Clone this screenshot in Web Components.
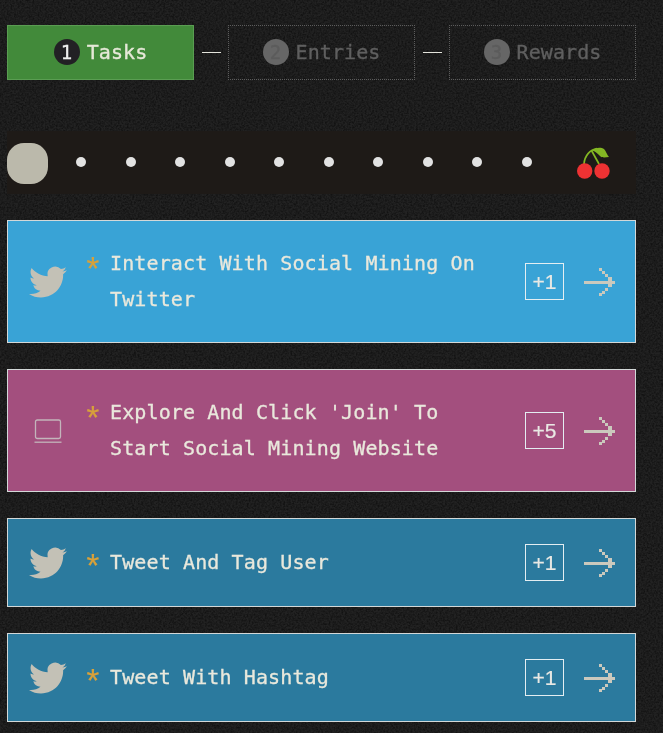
<!DOCTYPE html>
<html lang="en"><head><meta charset="utf-8"><title>Tasks</title>
<style>
html{margin:0;background:#1f1f1f;}
body{margin:0;width:663px;height:733px;overflow:hidden;font-family:"DejaVu Sans Mono","Liberation Mono",monospace;}
</style></head><body>
<noise-bg></noise-bg>
<quest-page>
  <step-bar slot="steps">
    <step-item n="1" active>Tasks</step-item>
    <step-sep></step-sep>
    <step-item n="2">Entries</step-item>
    <step-sep></step-sep>
    <step-item n="3">Rewards</step-item>
  </step-bar>
  <progress-track slot="track"></progress-track>
  <task-card color="#39a3d6" icon="bird" points="+1">Interact With Social Mining On Twitter</task-card>
  <task-card color="#a34f7e" icon="laptop" points="+5">Explore And Click 'Join' To Start Social Mining Website</task-card>
  <task-card color="#2b7a9e" icon="bird" points="+1" short>Tweet And Tag User</task-card>
  <task-card color="#2b7a9e" icon="bird" points="+1" short>Tweet With Hashtag</task-card>
</quest-page>
<script>
const BIRD='<svg viewBox="0 0 24 24" width="38" height="38" fill="#c3c1b6" style="display:block"><path d="M23.95 4.57a10 10 0 0 1-2.82.77 4.96 4.96 0 0 0 2.16-2.72c-.95.55-2 .96-3.13 1.2a4.92 4.92 0 0 0-8.38 4.48C7.69 8.1 4.07 6.13 1.64 3.16a4.82 4.82 0 0 0-.67 2.48c0 1.71.87 3.21 2.19 4.1a4.9 4.9 0 0 1-2.23-.61v.06c0 2.39 1.7 4.38 3.95 4.83a5 5 0 0 1-2.21.08 4.94 4.94 0 0 0 4.6 3.42A9.87 9.87 0 0 1 0 19.54a14 14 0 0 0 7.56 2.21c9.05 0 14-7.5 14-13.98 0-.21 0-.42-.02-.63a9.94 9.94 0 0 0 2.41-2.57z"/></svg>';
const LAPTOP='<svg viewBox="0 0 28 24" width="28" height="24" fill="none" stroke="#c3b5bb" stroke-width="1.300" style="display:block"><rect x="1.500" y="1" width="25" height="18.500" rx="1.800"/><path d="M.5 23.200h27"/></svg>';
function def(name,html,init){
  customElements.define(name,class extends HTMLElement{
    connectedCallback(){
      if(this.shadowRoot)return;
      const r=this.attachShadow({mode:'open'});
      r.innerHTML=typeof html==='function'?html(this):html;
      if(init)init(this,r);
    }
  });
}
def('noise-bg',`<style>:host{position:fixed;inset:0;z-index:-1;display:block}svg{display:block}</style>
<svg width="663" height="733"><filter id="n" x="0" y="0" width="100%" height="100%" color-interpolation-filters="sRGB"><feTurbulence type="fractalNoise" baseFrequency=".55" numOctaves="2" seed="4"/><feColorMatrix values="0 0 0 0 0 0 0 0 0 0 0 0 0 0 0 1.600 1.600 0 0 -1.250"/></filter><rect width="663" height="733" fill="#222222"/><rect width="663" height="733" filter="url(#n)" opacity=".45"/></svg>`);
def('quest-page',`<style>:host{display:flex;flex-direction:column;width:629px;padding:25px 0 0 7px}
.s{display:block;margin-bottom:51px}.t{display:block;margin-bottom:26px}
::slotted(task-card){margin-bottom:26px}</style>
<div class="s"><slot name="steps"></slot></div><div class="t"><slot name="track"></slot></div><slot></slot>`);
def('step-bar',`<style>:host{display:flex;align-items:center;height:55px}</style><slot></slot>`);
def('step-sep',`<style>:host{display:block;flex:none;width:19px;height:1px;background:#e4e4dc;margin:0 7px 0 8px;position:relative;top:-.5px}</style>`);
def('step-item',h=>{
  const a=h.hasAttribute('active');
  return `<style>:host{display:flex;flex:1 1 0;height:55px;box-sizing:border-box;padding-bottom:1px;align-items:center;justify-content:center;gap:7px;
  font-size:20px;letter-spacing:.1px;-webkit-text-stroke:.35px currentColor;
  ${a?'background:#428a3a;border:1px solid #5a9d52;color:#e6e8d8':'border:1px dotted #5c5c5c;color:#5f5f5f'}}
  .n{width:26px;height:26px;border-radius:50%;display:grid;place-items:center;font-size:19px;
  ${a?'background:#222024;color:#eee':'background:#666;color:#5c5c5c'}}</style>
  <span class="n">${h.getAttribute('n')}</span><span><slot></slot></span>`;
});
def('progress-track',()=>{
  return `<style>:host{display:flex;align-items:center;height:63px;background:#1e1a17}
  .thumb{width:41px;height:41px;border-radius:17px;background:#bbb9ab;flex:none;margin-top:2px}
  .dots{display:flex;justify-content:space-between;width:456px;margin-left:28px;margin-top:-2px}
  .dots i{width:10px;height:10px;border-radius:50%;background:#e2e2e2;display:block}
  svg{display:block;margin-left:44px;flex:none;margin-top:0}</style>
  <div class="thumb"></div><div class="dots">${'<i></i>'.repeat(10)}</div>
  <svg width="36" height="34" viewBox="0 0 36 34"><path d="M8 18C8.500 10 14 3.500 21 2.500" fill="none" stroke="#84b723" stroke-width="1.700"/><path d="M15.500 4.500L23 18" fill="none" stroke="#84b723" stroke-width="1.700"/><path d="M16 4.500C19 1.500 25 1 28 3C30 5 31 9 33 11C29 11.500 26 12 24 10C22 8 20 5.500 16 4.500z" fill="#84b723"/><circle cx="8.700" cy="25" r="7.700" fill="#ee3233"/><circle cx="26" cy="25" r="7.700" fill="#ee3233"/></svg>`;
});
def('task-card',h=>{
  const icon=h.getAttribute('icon')==='bird'?BIRD:LAPTOP;
  const short=h.hasAttribute('short');
  return `<style>:host{display:flex;align-items:center;box-sizing:border-box;height:${short?89:123}px;background:${h.getAttribute('color')};
  border:1px solid #d3d8d8;color:#e9e8dc;font-size:20px;letter-spacing:.12px;-webkit-text-stroke:.3px currentColor}
  .ic{width:40px;height:40px;margin-left:20px;flex:none;display:grid;place-items:center}
  .st{flex:none;width:27px;margin-left:15px;color:#d8a13a;font:33px/24px "Liberation Mono",monospace;position:relative;top:${short?7:0}px;-webkit-text-stroke:.2px #d8a13a}
  .st.top{align-self:flex-start;margin-top:40px}
  .tx{flex:1;line-height:36px;margin-right:30px;min-width:0;padding-bottom:2px}
  .pt{flex:none;box-sizing:border-box;width:39px;height:37px;border:1px solid #e4eef2;display:grid;place-items:center;font:21px "Liberation Sans",sans-serif;color:#e9e9e4;letter-spacing:0;-webkit-text-stroke:.2px currentColor}
  svg.ar{display:block;margin:0 20px 0 20px;flex:none}</style>
  <div class="ic">${icon}</div><span class="st ${short?'':'top'}">*</span><div class="tx"><slot></slot></div>
  <div class="pt">${h.getAttribute('points')}</div>
  <svg class="ar" width="31" height="28" viewBox="0 0 31 28" fill="#cbc9bd" shape-rendering="crispEdges"><rect x="0" y="13" width="26" height="3"/><rect x="24" y="9" width="4" height="10"/><rect x="28" y="13" width="3" height="3"/><rect x="21" y="6" width="3" height="3"/><rect x="18" y="3" width="3" height="3"/><rect x="15" y="0" width="3" height="3"/><rect x="21" y="20" width="3" height="3"/><rect x="18" y="23" width="3" height="3"/><rect x="15" y="25" width="3" height="3"/></svg>`;
});
</script>
</body></html>
